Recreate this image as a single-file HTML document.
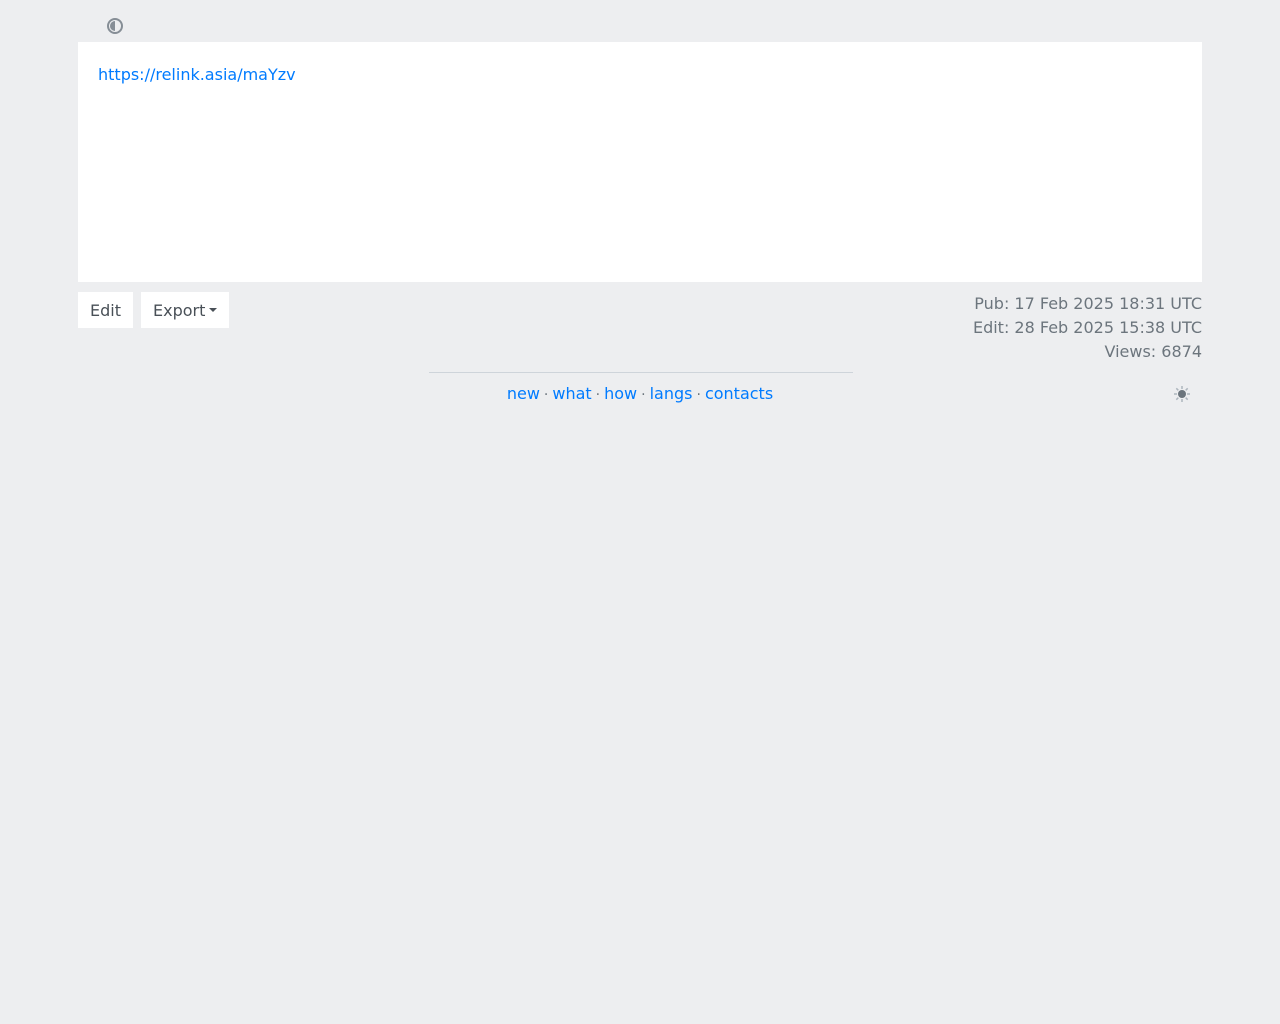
<!DOCTYPE html>
<html><head><meta charset="utf-8"><style>
body{margin:0;background:#edeef0;font-family:"DejaVu Sans",sans-serif;font-size:16px;color:#495057}
a{color:#007bff;text-decoration:none}
.box{position:absolute;left:78px;top:42px;width:1124px;height:240px;background:#fff}
.btn{position:absolute;top:292px;height:36px;background:#fff;line-height:37px;padding:0 12px;color:#495057;box-sizing:border-box;white-space:nowrap}
.meta{position:absolute;right:78px;top:292px;text-align:right;color:#6c757d;line-height:24px}
.hr{position:absolute;left:429px;width:424px;top:372px;border-top:1px solid #ced4da}
.foot{position:absolute;left:0;width:1280px;top:382px;text-align:center;line-height:24px;color:#6c757d}
.d{margin:0 4px;font-size:14px}
</style></head><body>
<svg style="position:absolute;left:106px;top:17px" width="18" height="18" viewBox="0 0 18 18"><circle cx="9" cy="9" r="7" fill="none" stroke="#868e96" stroke-width="2"/><path d="M9 4a5 5 0 0 0 0 10z" fill="#868e96"/></svg>
<div class="box"><a style="position:absolute;left:20px;top:23px" href="#">https://relink.asia/maYzv</a></div>
<div class="btn" style="left:78px;width:55px">Edit</div>
<div class="btn" style="left:141px;width:88px">Export<span style="display:inline-block;margin-left:4px;vertical-align:4px;border-left:4px solid transparent;border-right:4px solid transparent;border-top:4px solid #495057"></span></div>
<div class="meta">Pub: 17 Feb 2025 18:31 UTC<br>Edit: 28 Feb 2025 15:38 UTC<br>Views: 6874</div>
<div class="hr"></div>
<div class="foot"><a href="#">new</a><span class="d">·</span><a href="#">what</a><span class="d">·</span><a href="#">how</a><span class="d">·</span><a href="#">langs</a><span class="d">·</span><a href="#">contacts</a></div>
<svg style="position:absolute;left:1173px;top:385px" width="18" height="18" viewBox="0 0 18 18"><circle cx="9" cy="9" r="4" fill="#6c757d"/><g stroke="#adb5bd" stroke-width="1.5"><path d="M9 1v3M9 14v3M1 9h3M14 9h3M3.3 3.3l2 2M12.7 12.7l2 2M3.3 14.7l2-2M12.7 5.3l2-2"/></g></svg>
</body></html>
